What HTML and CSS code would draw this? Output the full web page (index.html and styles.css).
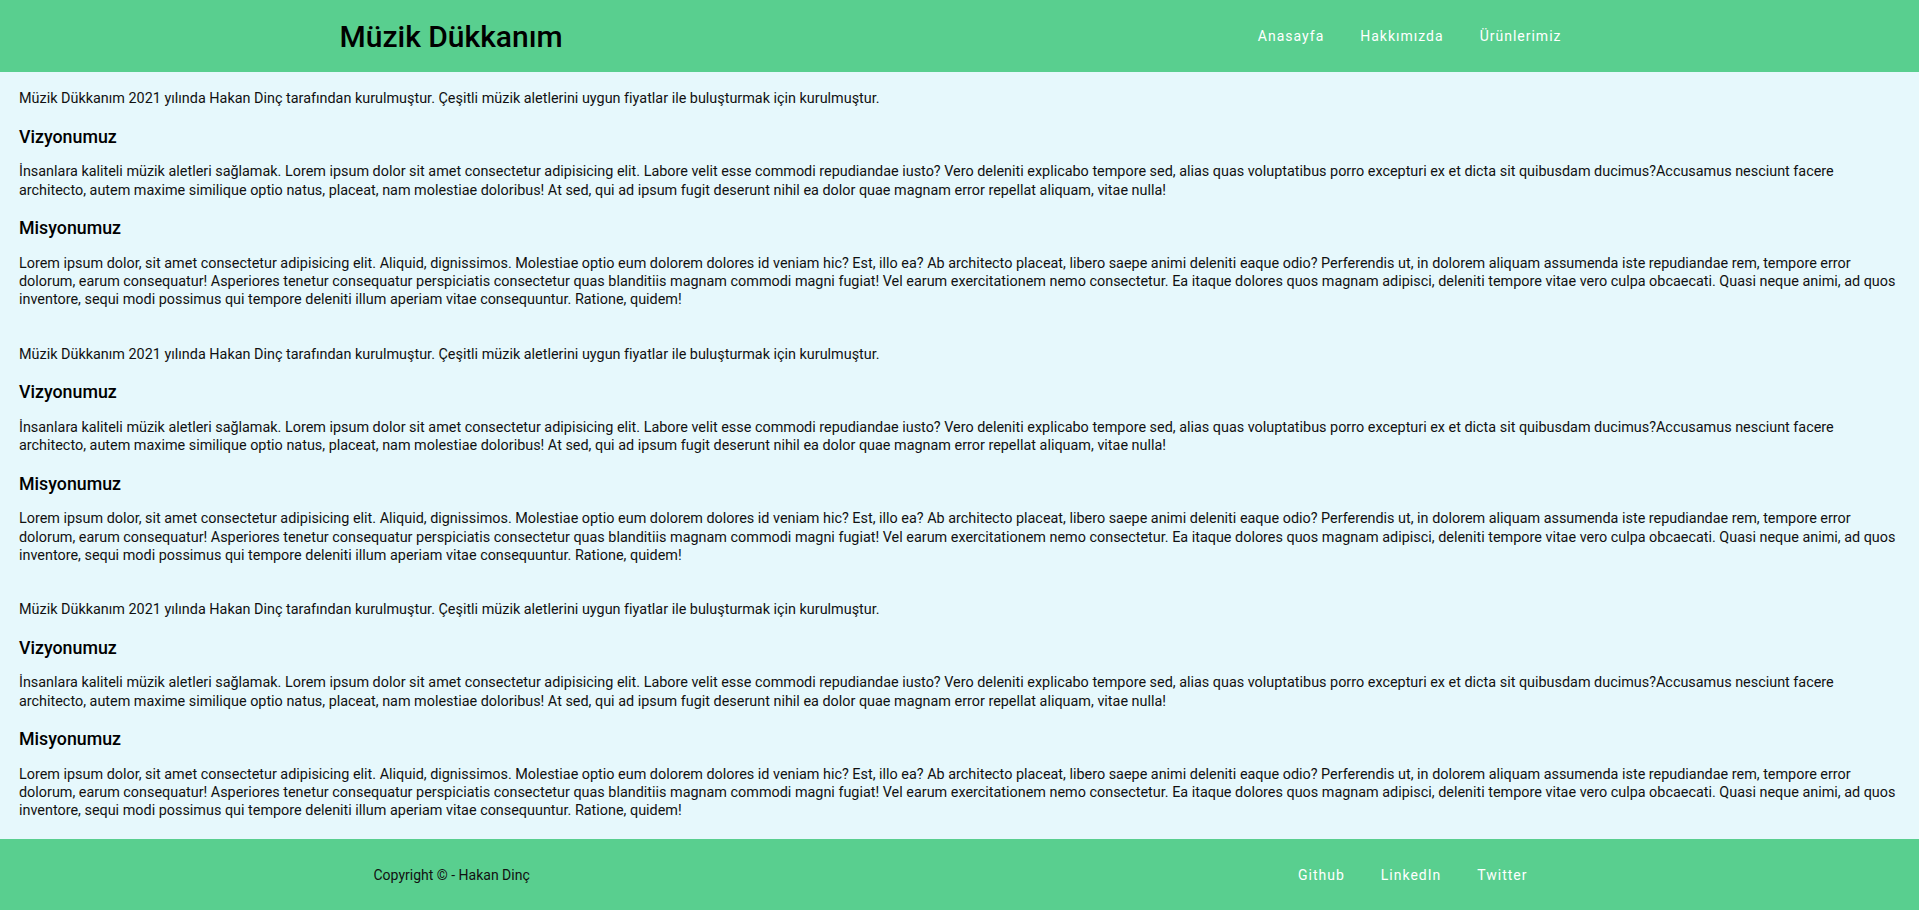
FILE: index.html
```html
<!DOCTYPE html>
<html lang="tr">
<head>
<meta charset="utf-8">
<title>Müzik Dükkanım</title>
<link rel="stylesheet" href="styles.css">
</head>
<body>
<header class="site-header">
  <div class="container header-inner">
    <h1 class="brand">Müzik Dükkanım</h1>
    <nav class="nav">
      <a href="#">Anasayfa</a>
      <a href="#">Hakkımızda</a>
      <a href="#">Ürünlerimiz</a>
    </nav>
  </div>
</header>
<main class="content">
  <section class="about">
    <p>Müzik Dükkanım 2021 yılında Hakan Dinç tarafından kurulmuştur. Çeşitli müzik aletlerini uygun fiyatlar ile buluşturmak için kurulmuştur.</p>
    <h3>Vizyonumuz</h3>
    <p>İnsanlara kaliteli müzik aletleri sağlamak. Lorem ipsum dolor sit amet consectetur adipisicing elit. Labore velit esse commodi repudiandae iusto? Vero deleniti explicabo tempore sed, alias quas voluptatibus porro excepturi ex et dicta sit quibusdam ducimus?Accusamus nesciunt facere architecto, autem maxime similique optio natus, placeat, nam molestiae doloribus! At sed, qui ad ipsum fugit deserunt nihil ea dolor quae magnam error repellat aliquam, vitae nulla!</p>
    <h3>Misyonumuz</h3>
    <p>Lorem ipsum dolor, sit amet consectetur adipisicing elit. Aliquid, dignissimos. Molestiae optio eum dolorem dolores id veniam hic? Est, illo ea? Ab architecto placeat, libero saepe animi deleniti eaque odio? Perferendis ut, in dolorem aliquam assumenda iste repudiandae rem, tempore error dolorum, earum consequatur! Asperiores tenetur consequatur perspiciatis consectetur quas blanditiis magnam commodi magni fugiat! Vel earum exercitationem nemo consectetur. Ea itaque dolores quos magnam adipisci, deleniti tempore vitae vero culpa obcaecati. Quasi neque animi, ad quos inventore, sequi modi possimus qui tempore deleniti illum aperiam vitae consequuntur. Ratione, quidem!</p>
  </section>
  <section class="about">
    <p>Müzik Dükkanım 2021 yılında Hakan Dinç tarafından kurulmuştur. Çeşitli müzik aletlerini uygun fiyatlar ile buluşturmak için kurulmuştur.</p>
    <h3>Vizyonumuz</h3>
    <p>İnsanlara kaliteli müzik aletleri sağlamak. Lorem ipsum dolor sit amet consectetur adipisicing elit. Labore velit esse commodi repudiandae iusto? Vero deleniti explicabo tempore sed, alias quas voluptatibus porro excepturi ex et dicta sit quibusdam ducimus?Accusamus nesciunt facere architecto, autem maxime similique optio natus, placeat, nam molestiae doloribus! At sed, qui ad ipsum fugit deserunt nihil ea dolor quae magnam error repellat aliquam, vitae nulla!</p>
    <h3>Misyonumuz</h3>
    <p>Lorem ipsum dolor, sit amet consectetur adipisicing elit. Aliquid, dignissimos. Molestiae optio eum dolorem dolores id veniam hic? Est, illo ea? Ab architecto placeat, libero saepe animi deleniti eaque odio? Perferendis ut, in dolorem aliquam assumenda iste repudiandae rem, tempore error dolorum, earum consequatur! Asperiores tenetur consequatur perspiciatis consectetur quas blanditiis magnam commodi magni fugiat! Vel earum exercitationem nemo consectetur. Ea itaque dolores quos magnam adipisci, deleniti tempore vitae vero culpa obcaecati. Quasi neque animi, ad quos inventore, sequi modi possimus qui tempore deleniti illum aperiam vitae consequuntur. Ratione, quidem!</p>
  </section>
  <section class="about">
    <p>Müzik Dükkanım 2021 yılında Hakan Dinç tarafından kurulmuştur. Çeşitli müzik aletlerini uygun fiyatlar ile buluşturmak için kurulmuştur.</p>
    <h3>Vizyonumuz</h3>
    <p>İnsanlara kaliteli müzik aletleri sağlamak. Lorem ipsum dolor sit amet consectetur adipisicing elit. Labore velit esse commodi repudiandae iusto? Vero deleniti explicabo tempore sed, alias quas voluptatibus porro excepturi ex et dicta sit quibusdam ducimus?Accusamus nesciunt facere architecto, autem maxime similique optio natus, placeat, nam molestiae doloribus! At sed, qui ad ipsum fugit deserunt nihil ea dolor quae magnam error repellat aliquam, vitae nulla!</p>
    <h3>Misyonumuz</h3>
    <p>Lorem ipsum dolor, sit amet consectetur adipisicing elit. Aliquid, dignissimos. Molestiae optio eum dolorem dolores id veniam hic? Est, illo ea? Ab architecto placeat, libero saepe animi deleniti eaque odio? Perferendis ut, in dolorem aliquam assumenda iste repudiandae rem, tempore error dolorum, earum consequatur! Asperiores tenetur consequatur perspiciatis consectetur quas blanditiis magnam commodi magni fugiat! Vel earum exercitationem nemo consectetur. Ea itaque dolores quos magnam adipisci, deleniti tempore vitae vero culpa obcaecati. Quasi neque animi, ad quos inventore, sequi modi possimus qui tempore deleniti illum aperiam vitae consequuntur. Ratione, quidem!</p>
  </section>
</main>
<footer class="site-footer">
  <div class="container footer-inner">
    <p class="copyright">Copyright © - Hakan Dinç</p>
    <nav class="nav">
      <a href="#">Github</a>
      <a href="#">LinkedIn</a>
      <a href="#">Twitter</a>
    </nav>
  </div>
</footer>
</body>
</html>
```
FILE: styles.css
```css
* {
  box-sizing: border-box;
}

html, body {
  margin: 0;
  padding: 0;
}

body {
  font-family: Roboto, "Noto Sans", Arial, sans-serif;
  font-size: 14.4px;
  color: #111;
  background: #e6f8fc;
}

.container {
  width: 1240px;
  margin: 0 auto;
}

.site-header,
.site-footer {
  background: #59cf8f;
  height: 72px;
}

.header-inner,
.footer-inner {
  height: 100%;
  display: flex;
  align-items: center;
  justify-content: space-between;
}

.footer-inner {
  padding: 0 34px;
}

.brand {
  margin: 0;
  font-size: 30px;
  font-weight: 500;
  color: #000;
  line-height: normal;
}

.nav {
  display: flex;
}

.nav a {
  padding: 0 18px;
  color: #fff;
  text-decoration: none;
  font-size: 14px;
  letter-spacing: 1px;
}

.copyright {
  margin: 0;
  font-size: 14px;
  color: #111;
}

.content {
  padding: 3.8px 19px 4.2px;
}

.about {
  margin-bottom: 35.85px;
}

.about:last-child {
  margin-bottom: 0;
}

.about p {
  margin: 14.4px 0;
  line-height: 18.35px;
}

.about h3 {
  margin: 17.35px 0 16.1px;
  font-size: 17.8px;
  font-weight: 500;
  line-height: 1.2;
  color: #000;
}
```
